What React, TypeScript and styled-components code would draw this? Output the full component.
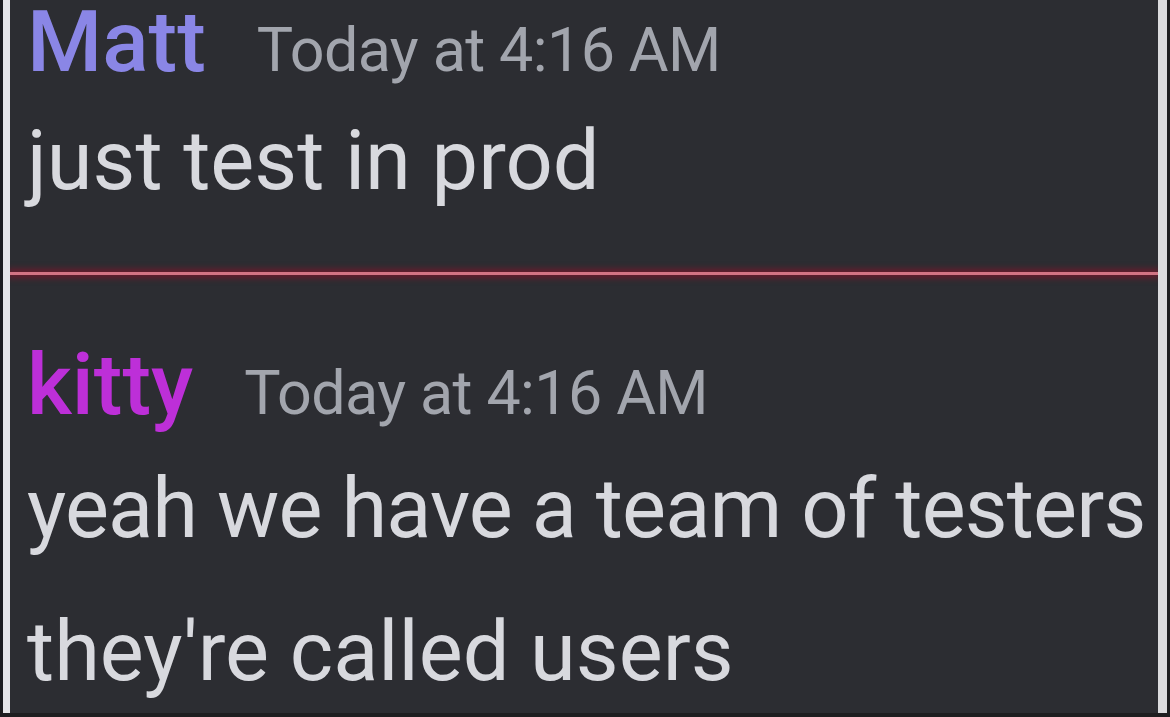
import React from "react";
import styled, { createGlobalStyle } from "styled-components";

const Global = createGlobalStyle`
  html, body { margin: 0; padding: 0; background: #1b1b1d; }
  body { width: 1170px; height: 717px; overflow: hidden; }
`;

const Frame = styled.div`
  width: 1170px;
  height: 717px;
  box-sizing: border-box;
  background: #1e1e20;
  padding: 0 3px 4px 3px;
  display: flex;
`;

const Panel = styled.div`
  flex: 1;
  box-sizing: border-box;
  border-left: 7px solid #e6e6e8;
  border-right: 9px solid #dcdcde;
  background: #2c2d32;
  overflow: hidden;
  display: flex;
  flex-direction: column;
  font-family: Roboto, "Noto Sans", sans-serif;
`;

const Group = styled.div`
  display: flex;
  flex-direction: column;
  padding-left: 17px;
`;

const Header = styled.div<{ $h?: number }>`
  height: ${(p) => p.$h ?? 118}px;
  line-height: ${(p) => p.$h ?? 118}px;
  white-space: nowrap;
`;

const Name = styled.span<{ $color: string }>`
  font-size: 86px;
  font-weight: 500;
  color: ${(p) => p.$color};
`;

const Stamp = styled.span`
  font-size: 61px;
  letter-spacing: -0.6px;
  color: #a2a5ad;
  margin-left: 51px;
`;

const Line = styled.div<{ $gap?: number; $tight?: boolean }>`
  height: 118px;
  line-height: 118px;
  font-size: 83px;
  color: #d8d9de;
  white-space: nowrap;
  letter-spacing: ${(p) => (p.$tight ? "-0.85px" : "0")};
  margin-top: ${(p) => p.$gap ?? 0}px;
`;

const Divider = styled.div`
  height: 3px;
  margin: 52px 0 51px;
  background: #d27484;
  box-shadow: 0 0 6px 3px rgba(120, 24, 44, 0.8);
`;

export default function App() {
  return (
    <>
      <Global />
      <Frame>
        <Panel>
          <Group>
            <Header $h={84}>
              <Name $color="#8a86e6">Matt</Name>
              <Stamp>Today at 4:16 AM</Stamp>
            </Header>
            <Line $gap={18}>just test in prod</Line>
          </Group>
          <Divider />
          <Group>
            <Header>
              <Name $color="#bd2fd8">kitty</Name>
              <Stamp>Today at 4:16 AM</Stamp>
            </Header>
            <Line $gap={6} $tight>
              yeah we have a team of testers
            </Line>
            <Line $gap={25}>they're called users</Line>
          </Group>
        </Panel>
      </Frame>
    </>
  );
}
